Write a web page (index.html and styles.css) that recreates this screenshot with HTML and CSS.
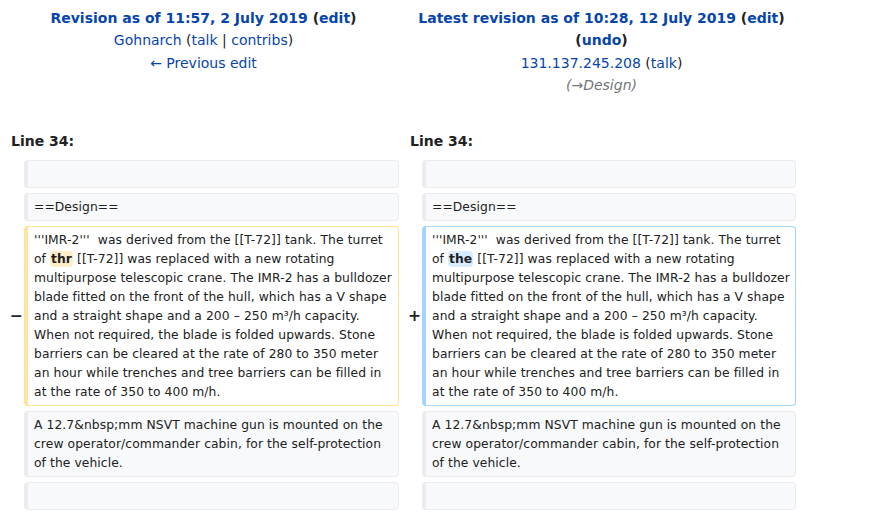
FILE: index.html
```html
<!DOCTYPE html>
<html lang="en">
<head>
<meta charset="utf-8">
<title>Difference between revisions</title>
<link rel="stylesheet" href="styles.css">
</head>
<body>
<div class="diff">
  <div class="title title-l">
    <div><strong><a href="#">Revision as of 11:57, 2 July 2019</a> (<a href="#">edit</a>)</strong></div>
    <div><a href="#">Gohnarch</a> (<a href="#">talk</a> | <a href="#">contribs</a>)</div>
    <div><a href="#">← Previous edit</a></div>
  </div>
  <div class="title title-r">
    <div><strong><a href="#">Latest revision as of 10:28, 12 July 2019</a> (<a href="#">edit</a>)</strong></div>
    <div><strong>(<a href="#">undo</a>)</strong></div>
    <div><a href="#">131.137.245.208</a> (<a href="#">talk</a>)</div>
    <div><span class="comment">(<a href="#" class="autocomment">→Design</a>)</span></div>
  </div>

  <div class="lineno lineno-l">Line 34:</div>
  <div class="lineno lineno-r">Line 34:</div>

  <div class="box context col-l"> </div>
  <div class="box context col-r"> </div>

  <div class="box context col-l">==Design==</div>
  <div class="box context col-r">==Design==</div>

  <div class="marker marker-l">−</div>
  <div class="box deleted col-l">'''IMR-2'''  was derived from the [[T-72]] tank. The turret of <del class="change">thr</del> [[T-72]] was replaced with a new rotating multipurpose telescopic crane. The IMR-2 has a bulldozer blade fitted on the front of the hull, which has a V shape and a straight shape and a 200 – 250 m³/h capacity. When not required, the blade is folded upwards. Stone barriers can be cleared at the rate of 280 to 350 meter an hour while trenches and tree barriers can be filled in at the rate of 350 to 400 m/h.</div>
  <div class="marker marker-r">+</div>
  <div class="box added col-r">'''IMR-2'''  was derived from the [[T-72]] tank. The turret of <ins class="change">the</ins> [[T-72]] was replaced with a new rotating multipurpose telescopic crane. The IMR-2 has a bulldozer blade fitted on the front of the hull, which has a V shape and a straight shape and a 200 – 250 m³/h capacity. When not required, the blade is folded upwards. Stone barriers can be cleared at the rate of 280 to 350 meter an hour while trenches and tree barriers can be filled in at the rate of 350 to 400 m/h.</div>

  <div class="box context col-l">A 12.7&amp;nbsp;mm NSVT machine gun is mounted on the crew operator/commander cabin, for the self-protection of the vehicle.</div>
  <div class="box context col-r">A 12.7&amp;nbsp;mm NSVT machine gun is mounted on the crew operator/commander cabin, for the self-protection of the vehicle.</div>

  <div class="box context col-l"> </div>
  <div class="box context col-r"> </div>
</div>
</body>
</html>
```

FILE: styles.css
```css
html, body {
  margin: 0;
  padding: 0;
  background: #ffffff;
}

body {
  font-family: "DejaVu Sans", sans-serif;
  font-size: 14px;
  color: #202122;
}

a {
  color: #0645ad;
  text-decoration: none;
}

.diff {
  display: grid;
  grid-template-columns: 16px 375px 8px 15px 374px;
  row-gap: 5px;
  padding: 7px 0 0 8px;
}

.title {
  text-align: center;
  line-height: 22.4px;
}

.title-l {
  grid-column: 1 / span 2;
  grid-row: 1;
}

.title-r {
  grid-column: 4 / span 2;
  grid-row: 1;
}

.comment {
  font-style: italic;
  color: #72777d;
}

.comment .autocomment {
  color: #72777d;
}

.lineno {
  grid-row: 2;
  font-weight: bold;
  line-height: 19px;
  padding: 30px 0 4.4px 3px;
}

.lineno-l {
  grid-column: 1 / span 2;
}

.lineno-r {
  grid-column: 4 / span 2;
}

.col-l {
  grid-column: 2;
}

.col-r {
  grid-column: 5;
}

.marker {
  align-self: center;
  text-align: center;
  font-weight: bold;
  font-size: 15.6px;
  line-height: 1.2;
}

.marker-l {
  grid-column: 1;
}

.marker-r {
  grid-column: 4;
}

.box {
  font-size: 12.32px;
  letter-spacing: 0.08px;
  white-space: pre-wrap;
  word-wrap: break-word;
  line-height: 19px;
  padding: 3.5px 3px 3.5px 6px;
  border-style: solid;
  border-width: 1px 1px 1px 4px;
  border-radius: 4px;
  min-height: 19px;
}

.context {
  background: #f8f9fa;
  border-color: #eaecf0;
}

.deleted {
  background: #ffffff;
  border-color: #ffe49c;
}

.added {
  background: #ffffff;
  border-color: #a3d3ff;
}

.change {
  font-weight: bold;
  text-decoration: none;
  border-radius: 4px;
  padding: 1px 1px;
}

.deleted .change {
  background: #feeec8;
}

.added .change {
  background: #d8ecff;
}
```
